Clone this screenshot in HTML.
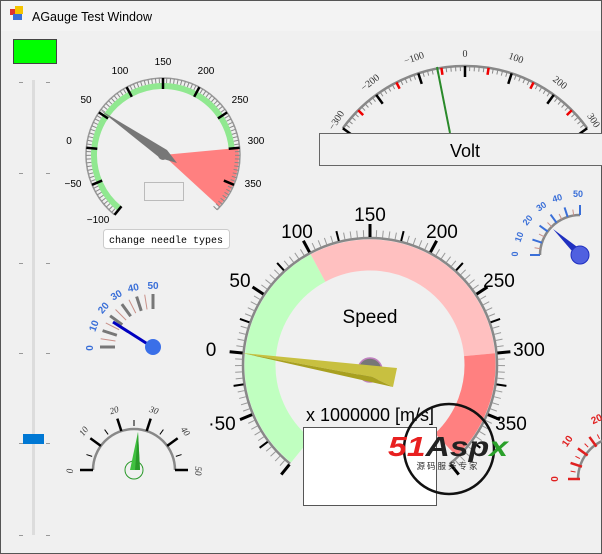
<!DOCTYPE html>
<html><head><meta charset="utf-8"><style>
body{margin:0;width:602px;height:554px;overflow:hidden;background:#f0f0f0;font-family:"Liberation Sans",sans-serif}
svg{position:absolute;left:0;top:0}
</style></head><body>
<svg id="s" width="602" height="554" viewBox="0 0 602 554" font-family="Liberation Sans, sans-serif">
<rect x="0" y="0" width="602" height="554" fill="#f0f0f0"/>
<rect x="0" y="0" width="602" height="31" fill="#f3f3f3"/>
<rect x="10" y="9" width="6" height="6" fill="#d33"/><rect x="15" y="6" width="8" height="8" fill="#f5c400"/><rect x="13" y="14" width="9" height="6" fill="#3a6fd8"/>
<text x="32" y="21" font-size="12.5" fill="#000">AGauge Test Window</text>
<rect x="0.5" y="0.5" width="601" height="553" fill="none" stroke="#555" stroke-width="1"/>
<rect x="13.5" y="39.5" width="43" height="24" fill="#00ff00" stroke="#444"/>
<rect x="32" y="80" width="3" height="455" fill="#dcdcdc"/>
<g id="sl" fill="#999"></g>
<rect x="23" y="434" width="21" height="10" fill="#0078d4"/>
<g id="g"></g>
<!-- gauge A labels -->
<g font-size="10" text-anchor="middle" fill="#000">
<text x="163" y="65">150</text><text x="120" y="74">100</text><text x="206" y="74">200</text>
<text x="86" y="103">50</text><text x="240" y="103">250</text>
<text x="69" y="144">0</text><text x="256" y="144">300</text>
<text x="73" y="187">−50</text><text x="253" y="187">350</text>
<text x="98" y="223">−100</text>
</g>
<rect x="144.5" y="182.5" width="39" height="18" fill="#f0f0f0" stroke="#bbb"/>
<polygon points="100,110 167,150 177,163 160,158" fill="#777"/>
<circle cx="163" cy="155" r="5" fill="#777"/>
<rect x="103.5" y="229.5" width="126" height="19" rx="3" fill="#fff" stroke="#ccc"/>
<text x="166" y="243" font-size="10" font-family="Liberation Mono, monospace" text-anchor="middle">change needle types</text>
<!-- Volt -->
<g font-size="10" font-family="Liberation Serif, serif" fill="#333" text-anchor="middle">
<text transform="translate(465,57)">0</text>
<text transform="translate(415,61) rotate(-19)">−100</text>
<text transform="translate(515,61) rotate(19)">100</text>
<text transform="translate(372,85) rotate(-38)">−200</text>
<text transform="translate(558,85) rotate(38)">200</text>
<text transform="translate(339,122) rotate(-57)">−300</text>
<text transform="translate(591,122) rotate(57)">300</text>
</g>
<line x1="450" y1="133" x2="437" y2="67" stroke="#2a8a2a" stroke-width="2"/>
<rect x="319.5" y="133.5" width="300" height="32" fill="#f0f0f0" stroke="#666"/>
<text x="465" y="157" font-size="18" text-anchor="middle">Volt</text>
<!-- big labels -->
<g font-size="19" text-anchor="middle" fill="#000">
<text x="370" y="221">150</text><text x="297" y="238">100</text><text x="442" y="238">200</text>
<text x="240" y="287">50</text><text x="499" y="287">250</text>
<text x="211" y="356">0</text><text x="529" y="356">300</text>
<text x="222" y="430">·50</text><text x="511" y="430">350</text>
<text x="370" y="323">Speed</text>
<text x="370" y="421" font-size="18">x 1000000 [m/s]</text>
</g>
<circle cx="370" cy="370" r="12" fill="#777" stroke="#c080c0" stroke-width="1.5"/>
<polygon points="242,353 397,368 393,387 372,377" fill="#c8c040"/>
<polygon points="242,353 372,377 393,387" fill="#a8a020"/>
<rect x="303.5" y="427.5" width="133" height="78" fill="#fff" stroke="#555"/>
<!-- watermark -->
<circle cx="449" cy="449" r="45" fill="none" stroke="#111" stroke-width="2.5"/>
<text x="388" y="456" font-size="28" font-weight="bold" font-style="italic" fill="#e82020" textLength="120" lengthAdjust="spacingAndGlyphs">51<tspan fill="#222">Asp</tspan><tspan fill="#2aa02a">x</tspan></text>
<text x="448" y="469" font-size="8.5" text-anchor="middle" fill="#333" font-family="Noto Sans CJK SC, sans-serif" letter-spacing="2">源码服务专家</text>
<!-- small blue right -->
<g font-size="9" font-weight="bold" fill="#3a6fd8" text-anchor="middle">
<text transform="translate(518,254) rotate(-90)">0</text>
<text transform="translate(522,238) rotate(-70)">10</text>
<text transform="translate(530,222) rotate(-52)">20</text>
<text transform="translate(543,209) rotate(-34)">30</text>
<text transform="translate(558,201) rotate(-16)">40</text>
<text transform="translate(578,197)">50</text>
</g>
<polygon points="553,229 584,252 578,258" fill="#2030c0"/>
<circle cx="580" cy="255" r="9" fill="#5060e0" stroke="#2030c0"/>
<!-- left blue -->
<g font-size="10" font-weight="bold" fill="#3a6fd8" text-anchor="middle">
<text transform="translate(93,348) rotate(-90)">0</text>
<text transform="translate(97,327) rotate(-70)">10</text>
<text transform="translate(106,310) rotate(-50)">20</text>
<text transform="translate(118,298) rotate(-30)">30</text>
<text transform="translate(134,291) rotate(-12)">40</text>
<text transform="translate(153,289)">50</text>
</g>
<line x1="113" y1="322" x2="157" y2="350" stroke="#0000c0" stroke-width="3"/>
<circle cx="153" cy="347" r="8" fill="#3a6fe8"/>
<!-- green gauge -->
<g font-size="9" font-family="Liberation Serif, serif" font-style="italic" fill="#333" text-anchor="middle">
<text transform="translate(73,471) rotate(-90)">0</text>
<text transform="translate(86,433) rotate(-54)">10</text>
<text transform="translate(115,413) rotate(-18)">20</text>
<text transform="translate(153,413) rotate(18)">30</text>
<text transform="translate(183,433) rotate(54)">40</text>
<text transform="translate(195,471) rotate(90)">50</text>
</g>
<circle cx="134" cy="470" r="9" fill="none" stroke="#2a9a2a"/>
<polygon points="138,432 130,470 140,470" fill="#40c040"/>
<polygon points="138,432 135,470 140,470" fill="#2a9a2a"/>
<!-- red gauge -->
<g font-size="10" font-weight="bold" fill="#e02020" text-anchor="middle">
<text transform="translate(558,479) rotate(-90)">0</text>
<text transform="translate(570,443) rotate(-55)">10</text>
<text transform="translate(598,422) rotate(-25)">20</text>
</g>
</svg>
<script>
var g=document.getElementById('g'),NS='http://www.w3.org/2000/svg';
function P(cx,cy,r,d){d=d*Math.PI/180;return[cx+r*Math.sin(d),cy-r*Math.cos(d)];}
function ln(a,b,c,w){var e=document.createElementNS(NS,'line');e.setAttribute('x1',a[0]);e.setAttribute('y1',a[1]);e.setAttribute('x2',b[0]);e.setAttribute('y2',b[1]);e.setAttribute('stroke',c);e.setAttribute('stroke-width',w);g.appendChild(e);}
function arc(cx,cy,r,a1,a2,c,w){var p=P(cx,cy,r,a1),q=P(cx,cy,r,a2);var e=document.createElementNS(NS,'path');e.setAttribute('d','M'+p+'A'+r+','+r+' 0 '+((a2-a1)>180?1:0)+' 1 '+q);e.setAttribute('fill','none');e.setAttribute('stroke',c);e.setAttribute('stroke-width',w);g.appendChild(e);}
function wedge(cx,cy,r,a1,a2,c){var p=P(cx,cy,r,a1),q=P(cx,cy,r,a2);var e=document.createElementNS(NS,'path');e.setAttribute('d','M'+cx+','+cy+'L'+p+'A'+r+','+r+' 0 0 1 '+q+'Z');e.setAttribute('fill',c);g.appendChild(e);}
function A(v){return -141+(v+100)*0.564;}
var sl=document.getElementById('sl');
[82,173,263,353,443,535].forEach(function(y){['<rect x="19" y="'+y+'" width="4" height="1"/>','<rect x="46" y="'+y+'" width="4" height="1"/>'].forEach(function(s){sl.insertAdjacentHTML('beforeend',s)});});
var cx=163,cy=155;
arc(cx,cy,69,A(-100),A(300),'#90e890',6);
wedge(cx,cy,76,A(300),A(385),'#ff8080');
arc(cx,cy,77,A(-100),A(390),'#999',1.5);
for(var v=-100;v<=390;v+=5){var m=v%50==0;ln(P(cx,cy,m?66:72,A(v)),P(cx,cy,77,A(v)),m?'#000':'#888',m?2.5:1);}
cx=370;cy=365;
arc(cx,cy,110,A(-100),A(100),'#c0ffc0',31);
arc(cx,cy,110,A(100),A(300),'#ffc0c0',31);
arc(cx,cy,110,A(300),A(392),'#ff8080',31);
arc(cx,cy,127,A(-100),A(400),'#888',2.5);
for(v=-100;v<=400;v+=5){m=v%50==0;var mid=v%25==0;ln(P(cx,cy,128,A(v)),P(cx,cy,m?141:(mid?138:135),A(v)),m||mid?'#000':'#999',m?3:(mid?2:1));}
cx=465;cy=217;
arc(cx,cy,151,-54,54,'#888',2.5);
for(v=-300;v<=300;v+=10){var d=v*0.18,M=v%100==0,R=(v%50==0)&&!M;ln(P(cx,cy,151,d),P(cx,cy,M?140:(R?144:146),d),M?'#000':(R?'#e00':'#888'),M?2.5:(R?2.5:1));}
cx=580;cy=255;arc(cx,cy,40,-90,0,'#888',2.5);
for(v=0;v<=50;v+=5){d=-90+v*1.8;m=v%10==0;ln(P(cx,cy,40,d),P(cx,cy,m?50:46,d),m?'#3a6fd8':'#c89088',m?2:1);}
cx=153;cy=347;
for(v=0;v<=50;v+=5){d=-90+v*1.8;m=v%10==0;ln(P(cx,cy,38,d),P(cx,cy,53,d),m?'#777':'#c89088',m?3:1);}
cx=134;cy=470;arc(cx,cy,41,-90,90,'#888',2.5);
for(v=0;v<=50;v+=5){d=-90+v*3.6;m=v%10==0;ln(P(cx,cy,m?41:44,d),P(cx,cy,m?54:50,d),'#000',m?2.5:1);}
cx=620;cy=479;arc(cx,cy,42,-90,0,'#888',2.5);
for(v=0;v<=50;v+=5){d=-90+v*1.8;m=v%10==0;ln(P(cx,cy,m?40:45,d),P(cx,cy,m?52:50,d),'#e02020',m?2.5:1);}
</script>
</body></html>
